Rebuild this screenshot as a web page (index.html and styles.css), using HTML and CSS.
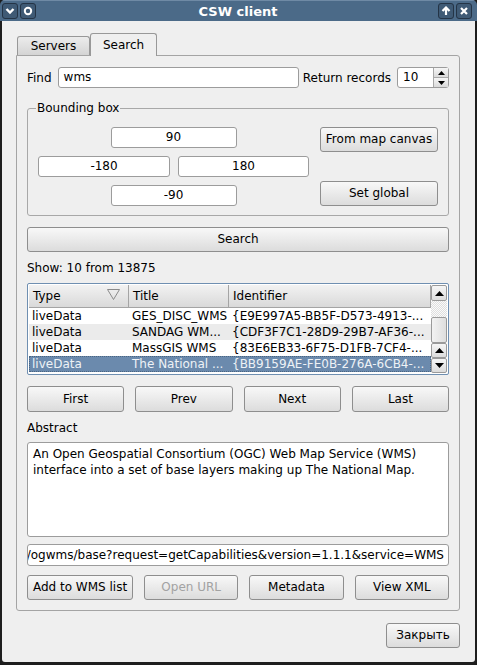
FILE: index.html
```html
<!DOCTYPE html>
<html>
<head>
<meta charset="utf-8">
<title>CSW client</title>
<link rel="stylesheet" href="styles.css">
</head>
<body>
<div class="window">
  <div class="titlebar">
    <div class="tb-group">
      <span class="tb-btn"><svg width="10" height="10" viewBox="0 0 10 10"><path d="M1.5 3 L5 6.5 L8.5 3" fill="none" stroke="#fff" stroke-width="2.4"/></svg></span>
      <span class="tb-btn"><svg width="10" height="10" viewBox="0 0 10 10"><circle cx="5" cy="5" r="3.2" fill="none" stroke="#fff" stroke-width="2"/></svg></span>
    </div>
    <div class="tb-title">CSW client</div>
    <div class="tb-group">
      <span class="tb-btn"><svg width="10" height="10" viewBox="0 0 10 10"><path d="M5 9 V2 M1.5 5 L5 1.5 L8.5 5" fill="none" stroke="#fff" stroke-width="2.2"/></svg></span>
      <span class="tb-btn"><svg width="10" height="10" viewBox="0 0 10 10"><path d="M2 2 L8 8 M8 2 L2 8" fill="none" stroke="#fff" stroke-width="2.2"/></svg></span>
    </div>
  </div>

  <div class="client">
    <div class="tabbar">
      <div class="tab">Servers</div>
      <div class="tab active">Search</div>
    </div>

    <div class="panel">
      <div class="find-row">
        <span class="lbl-find">Find</span>
        <div class="edit grow">wms</div>
        <span class="lbl-rr">Return records</span>
        <div class="spin">
          <span class="spin-val">10</span>
          <div class="spin-btns">
            <span class="spin-b"><svg width="7" height="4" viewBox="0 0 7 4"><path d="M0 4 L3.5 0 L7 4Z" fill="#000"/></svg></span>
            <span class="spin-b"><svg width="7" height="4" viewBox="0 0 7 4"><path d="M0 0 L3.5 4 L7 0Z" fill="#000"/></svg></span>
          </div>
        </div>
      </div>

      <fieldset class="bbox">
        <legend>Bounding box</legend>
        <div class="bbox-inner">
          <div class="coords">
            <div class="coord-row"><div class="edit center w-short">90</div></div>
            <div class="coord-row"><div class="edit center w-left">-180</div><div class="edit center w-right">180</div></div>
            <div class="coord-row"><div class="edit center w-short">-90</div></div>
          </div>
          <div class="bbox-btns">
            <div class="btn">From map canvas</div>
            <div class="btn">Set global</div>
          </div>
        </div>
      </fieldset>

      <div class="btn search-btn">Search</div>

      <div class="show-lbl">Show: 10 from 13875</div>

      <div class="table">
        <div class="table-main">
          <div class="row head">
            <div class="c c1">Type<svg class="sort" width="13" height="11" viewBox="0 0 13 11"><path d="M0.5 0.5 H12.5 L6.5 10.5 Z" fill="none" stroke="#8a8a8a"/></svg></div>
            <div class="c c2">Title</div>
            <div class="c c3">Identifier</div>
          </div>
          <div class="row">
            <div class="c c1">liveData</div>
            <div class="c c2">GES_DISC_WMS</div>
            <div class="c c3">{E9E997A5-BB5F-D573-4913-...</div>
          </div>
          <div class="row alt">
            <div class="c c1">liveData</div>
            <div class="c c2">SANDAG WM...</div>
            <div class="c c3">{CDF3F7C1-28D9-29B7-AF36-...</div>
          </div>
          <div class="row">
            <div class="c c1">liveData</div>
            <div class="c c2">MassGIS WMS</div>
            <div class="c c3">{83E6EB33-6F75-D1FB-7CF4-...</div>
          </div>
          <div class="row sel">
            <div class="c c1">liveData</div>
            <div class="c c2">The National ...</div>
            <div class="c c3">{BB9159AE-FE0B-276A-6CB4-...</div>
          </div>
        </div>
        <div class="scrollbar">
          <div class="sb-btn h16"><svg width="9" height="5" viewBox="0 0 9 5"><path d="M0 5 L4.5 0 L9 5Z" fill="#000"/></svg></div>
          <div class="sb-track"></div>
          <div class="sb-handle"></div>
          <div class="sb-btn h15"><svg width="9" height="5" viewBox="0 0 9 5"><path d="M0 5 L4.5 0 L9 5Z" fill="#000"/></svg></div>
          <div class="sb-btn h15"><svg width="9" height="5" viewBox="0 0 9 5"><path d="M0 0 L4.5 5 L9 0Z" fill="#000"/></svg></div>
        </div>
      </div>

      <div class="btn-row nav">
        <div class="btn">First</div>
        <div class="btn">Prev</div>
        <div class="btn">Next</div>
        <div class="btn">Last</div>
      </div>

      <div class="abs-lbl">Abstract</div>
      <div class="abstract">An Open Geospatial Consortium (OGC) Web Map Service (WMS) interface into a set of base layers making up The National Map.</div>

      <div class="edit url"><span>http://services.nationalmap.gov/ogwms/base?request=getCapabilities&amp;version=1.1.1&amp;service=WMS</span></div>

      <div class="btn-row actions">
        <div class="btn add">Add to WMS list</div>
        <div class="btn disabled">Open URL</div>
        <div class="btn">Metadata</div>
        <div class="btn">View XML</div>
      </div>
    </div>

    <div class="footer">
      <div class="btn close">Закрыть</div>
    </div>
  </div>
</div>
</body>
</html>
```

FILE: styles.css
```css
html, body {
  margin: 0;
  padding: 0;
  background: #1c1c1c;
}
body {
  font-family: "DejaVu Sans", "Noto Sans", sans-serif;
  font-size: 12px;
  color: #000;
}

.window {
  width: 477px;
  height: 665px;
  box-sizing: border-box;
  background: #1e1e1e;
  border-radius: 5px 5px 4px 4px;
  display: flex;
  flex-direction: column;
  overflow: hidden;
}

/* title bar */
.titlebar {
  height: 21px;
  flex: none;
  background: #4b6a88;
  border-top: 1px solid #6f8aa5;
  box-sizing: border-box;
  display: flex;
  align-items: center;
  justify-content: space-between;
  padding: 0 5px 0 2px;
}
.tb-group {
  display: flex;
  gap: 2px;
}
.tb-btn {
  width: 16px;
  height: 16px;
  box-sizing: border-box;
  border: 1px solid #243446;
  border-radius: 3px;
  background: #3f5a75;
  display: flex;
  align-items: center;
  justify-content: center;
}
.tb-title {
  color: #fff;
  font-weight: bold;
  font-size: 13px;
  margin-left: 2px;
}

/* client area */
.client {
  flex: 1;
  margin: 0 2px 3px 2px;
  background: #efefef;
  border-radius: 0 0 3px 3px;
  padding: 12px 15px 0 14px;
}

.tabbar {
  display: flex;
  align-items: flex-end;
  height: 22px;
  padding-left: 1px;
  position: relative;
  z-index: 1;
}
.tab {
  height: 19px;
  box-sizing: border-box;
  border: 1px solid #989898;
  border-bottom: none;
  border-radius: 3px 3px 0 0;
  background: linear-gradient(#ececec, #d4d4d4);
  padding: 0 12px;
  line-height: 18px;
  width: 73px;
  text-align: center;
}
.tab.active {
  height: 23px;
  margin-bottom: -1px;
  width: 67px;
  background: #efefef;
  line-height: 22px;
  padding-bottom: 2px;
}

.panel {
  border: 1px solid #a4a4a4;
  border-radius: 0 3px 3px 3px;
  padding: 11px 10px 10px 10px;
  height: 556px;
  box-sizing: border-box;
}

/* edits */
.edit {
  height: 21px;
  box-sizing: border-box;
  background: #fff;
  border: 1px solid #9c9c9c;
  border-radius: 3px;
  padding: 0 5px;
  line-height: 19px;
  white-space: nowrap;
  overflow: hidden;
}
.edit.center { text-align: center; }
.grow { flex: 1; }

.find-row {
  display: flex;
  align-items: center;
  height: 21px;
}
.lbl-find { margin-right: 6px; }
.lbl-rr { margin: 0 6px 0 4px; }

.spin {
  width: 52px;
  height: 21px;
  box-sizing: border-box;
  background: #fff;
  border: 1px solid #9c9c9c;
  border-radius: 3px;
  display: flex;
}
.spin-val {
  flex: 1;
  padding-left: 5px;
  line-height: 19px;
}
.spin-btns {
  width: 15px;
  display: flex;
  flex-direction: column;
}
.spin-b {
  flex: 1;
  border-left: 1px solid #a8a8a8;
  background: linear-gradient(#f6f6f6, #dadada);
  display: flex;
  align-items: center;
  justify-content: center;
}
.spin-b + .spin-b { border-top: 1px solid #a8a8a8; }

/* bounding box group */
.bbox {
  margin: 13px 0 0 0;
  padding: 12px 10px 9px 10px;
  border: 1px solid #a8a8a8;
  border-radius: 3px;
  min-width: 0;
}
.bbox legend {
  padding: 0 1px;
  margin-left: -2px;
  line-height: 14px;
}
.bbox-inner {
  display: flex;
  justify-content: space-between;
}
.coords {
  width: 271px;
  display: flex;
  flex-direction: column;
  gap: 8px;
}
.coord-row {
  display: flex;
  justify-content: center;
  gap: 8px;
}
.w-short { width: 126px; }
.w-left { width: 132px; }
.w-right { width: 131px; }
.bbox-btns {
  width: 118px;
  display: flex;
  flex-direction: column;
  justify-content: space-between;
}

/* buttons */
.btn {
  height: 25px;
  box-sizing: border-box;
  border: 1px solid #8e8e8e;
  border-radius: 3px;
  background: linear-gradient(#f8f8f8, #dcdcdc);
  text-align: center;
  line-height: 23px;
  white-space: nowrap;
}
.btn.disabled { color: #a2a2a2; }

.search-btn { margin-top: 11px; }

.show-lbl {
  margin-top: 9px;
  line-height: 14px;
}

/* result table */
.table {
  margin-top: 8px;
  height: 92px;
  box-sizing: border-box;
  border: 1px solid #6f8fb1;
  border-radius: 2px;
  padding: 1px;
  background: #fff;
  display: flex;
}
.table-main { width: 402px; }
.row {
  display: flex;
  height: 16px;
  line-height: 16px;
}
.row.alt { background: #ebebeb; }
.row.sel {
  background: #6b8aad;
  color: #eef2f6;
  outline: 1px dotted #4a6582;
  outline-offset: -1px;
}
.row.head {
  height: 23px;
  line-height: 22px;
  background: linear-gradient(#f2f2f2, #d8d8d8);
}
.c {
  white-space: nowrap;
  overflow: hidden;
  box-sizing: border-box;
}
.c1 { width: 100px; padding-left: 3px; }
.c2 { width: 100px; padding-left: 3px; }
.c3 { width: 202px; padding-left: 3px; }
.head .c {
  border-right: 1px solid #a4a4a4;
  border-bottom: 1px solid #a4a4a4;
  padding-left: 4px;
  position: relative;
}
.sort {
  position: absolute;
  right: 8px;
  top: 4px;
}

.scrollbar {
  width: 16px;
  display: flex;
  flex-direction: column;
}
.sb-btn {
  box-sizing: border-box;
  border: 1px solid #9a9a9a;
  border-radius: 2px;
  background: linear-gradient(#f6f6f6, #dcdcdc);
  display: flex;
  align-items: center;
  justify-content: center;
}
.h16 { height: 16px; }
.h15 { height: 15px; }
.sb-track {
  height: 16px;
  background-color: #f4f4f4;
  background-image: repeating-conic-gradient(#dedede 0 25%, #fafafa 0 50%);
  background-size: 2px 2px;
}
.sb-handle {
  height: 26px;
  box-sizing: border-box;
  border: 1px solid #9a9a9a;
  border-radius: 2px;
  background: linear-gradient(90deg, #f2f2f2, #dedede);
}

.btn-row {
  display: flex;
  gap: 11px;
}
.btn-row .btn { flex: 1; }
.nav { margin-top: 11px; }
.nav .btn { height: 26px; line-height: 24px; }

.abs-lbl {
  margin-top: 9px;
  line-height: 14px;
}
.abstract {
  margin-top: 7px;
  height: 95px;
  box-sizing: border-box;
  background: #fff;
  border: 1px solid #9c9c9c;
  border-radius: 3px;
  padding: 3px 5px;
  line-height: 16px;
}

.url {
  margin-top: 7px;
  height: 22px;
  line-height: 20px;
  display: flex;
  justify-content: flex-end;
  padding-right: 4px;
}
.url span { flex: none; }

.actions { margin-top: 9px; }
.actions .add { flex: none; width: 106px; }

.footer {
  display: flex;
  justify-content: flex-end;
  margin-top: 12px;
}
.close { width: 74px; }
```
